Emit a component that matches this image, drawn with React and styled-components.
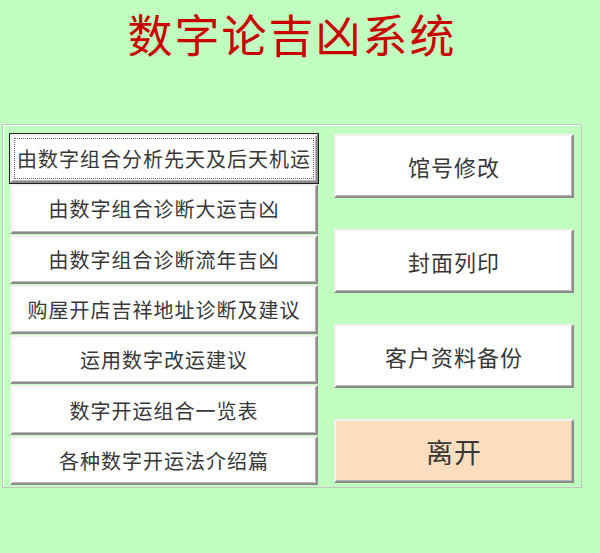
import React from 'react'
import styled, { createGlobalStyle } from 'styled-components'

const GlobalStyle = createGlobalStyle`
  html, body {
    margin: 0;
    padding: 0;
    background: #c0ffc0;
  }
  body {
    font-family: "Noto Sans CJK SC", "Noto Sans", sans-serif;
  }
`

const Page = styled.div`
  width: 600px;
  height: 553px;
  background: #c0ffc0;
  overflow: hidden;
`

const TitleBar = styled.div`
  width: 580px;
  height: 124px;
  margin-left: 2px;
  display: flex;
  justify-content: center;
  box-sizing: border-box;
  padding-top: 4px;
`

const Title = styled.h1`
  margin: 0;
  font-size: 45px;
  line-height: 60px;
  font-weight: 400;
  letter-spacing: 2px;
  color: #c80000;
`

const Panel = styled.div`
  margin-left: 2px;
  width: 580px;
  height: 364px;
  box-sizing: border-box;
  border: 1px solid #c4c4c4;
  box-shadow: inset 1px 1px 0 #eefeee;
  padding: 9px 7px 2px 7px;
  display: grid;
  grid-template-columns: 308px 240px;
  column-gap: 16px;
`

const LeftColumn = styled.div`
  display: grid;
  grid-template-rows: repeat(7, 1fr);
  row-gap: 1px;
`

const RightColumn = styled.div`
  display: grid;
  grid-template-rows: repeat(4, 64px);
  row-gap: 31px;
  align-content: start;
`

const Button = styled.button`
  position: relative;
  margin: 0;
  padding: 0;
  box-sizing: border-box;
  background: ${p => (p.$tone === 'peach' ? '#ffdec0' : '#ffffff')};
  border: none;
  border-top: 2px solid #f0f0f0;
  border-left: 2px solid #f0f0f0;
  border-right: 2px solid #8c8c8c;
  border-bottom: 2px solid #8c8c8c;
  box-shadow: inset -1px -1px 0 #b8b8b8;
  outline: ${p => (p.$focused ? '1px solid #202020' : 'none')};
  outline-offset: 0;
  font-family: "Noto Sans CJK SC", "Noto Sans", sans-serif;
  font-size: ${p => p.$size || 20}px;
  font-weight: 400;
  letter-spacing: 1px;
  color: #383838;
  text-align: center;
  white-space: nowrap;
  cursor: pointer;
`

const FocusRing = styled.span`
  position: absolute;
  inset: 2px;
  border: 1px dotted #606060;
  pointer-events: none;
`

const leftItems = [
  '由数字组合分析先天及后天机运',
  '由数字组合诊断大运吉凶',
  '由数字组合诊断流年吉凶',
  '购屋开店吉祥地址诊断及建议',
  '运用数字改运建议',
  '数字开运组合一览表',
  '各种数字开运法介绍篇',
]

const rightItems = [
  { label: '馆号修改', size: 22 },
  { label: '封面列印', size: 22 },
  { label: '客户资料备份', size: 22 },
  { label: '离开', size: 27, tone: 'peach' },
]

export default function App() {
  return (
    <Page>
      <GlobalStyle />
      <TitleBar>
        <Title>数字论吉凶系统</Title>
      </TitleBar>
      <Panel>
        <LeftColumn>
          {leftItems.map((label, i) => (
            <Button key={label} $focused={i === 0}>
              {label}
              {i === 0 && <FocusRing />}
            </Button>
          ))}
        </LeftColumn>
        <RightColumn>
          {rightItems.map(item => (
            <Button key={item.label} $size={item.size} $tone={item.tone}>
              {item.label}
            </Button>
          ))}
        </RightColumn>
      </Panel>
    </Page>
  )
}
